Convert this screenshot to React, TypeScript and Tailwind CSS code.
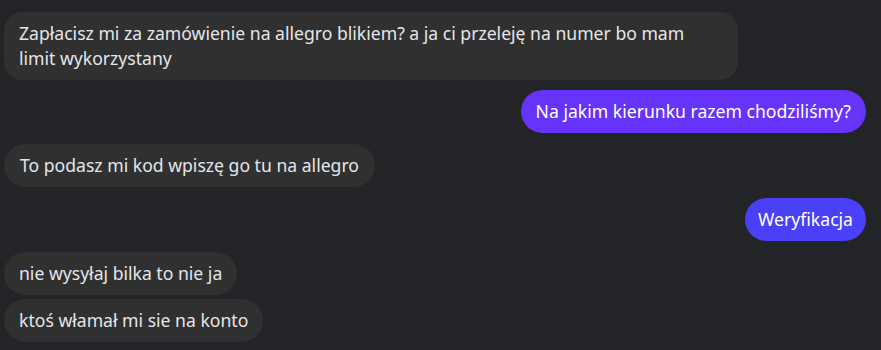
export default function App() {
  return (
    <div className="h-[350px] w-[881px] overflow-hidden bg-[#232427] pt-3 font-['Noto_Sans',sans-serif] text-[17.6px] leading-[25px] text-[#e4e6eb]">
      <div className="flex flex-col">
        <div className="flex pl-1">
          <div className="w-[734px] rounded-[18px] bg-[#303030] px-[15px] py-[9px]">
            Zapłacisz mi za zamówienie na allegro blikiem? a ja ci przeleję na numer bo mam
            <br />
            limit wykorzystany
          </div>
        </div>
        <div className="mt-[10px] flex justify-end pr-[15px]">
          <div className="rounded-[22px] bg-[#6633f8] px-[15px] py-[9px] text-white">
            Na jakim kierunku razem chodziliśmy?
          </div>
        </div>
        <div className="mt-[11px] flex pl-1">
          <div className="rounded-[22px] bg-[#303030] px-[16px] py-[9px]">
            To podasz mi kod wpiszę go tu na allegro
          </div>
        </div>
        <div className="mt-[11px] flex justify-end pr-[15px]">
          <div className="rounded-[22px] bg-[#4a40f7] px-[13px] py-[9px] text-white">
            Weryfikacja
          </div>
        </div>
        <div className="mt-[11px] flex pl-1">
          <div className="rounded-[22px] bg-[#303030] px-[15px] py-[9px]">
            nie wysyłaj bilka to nie ja
          </div>
        </div>
        <div className="mt-1 flex pl-1">
          <div className="rounded-[22px] bg-[#303030] px-[15px] py-[9px]">
            ktoś włamał mi sie na konto
          </div>
        </div>
      </div>
    </div>
  );
}
